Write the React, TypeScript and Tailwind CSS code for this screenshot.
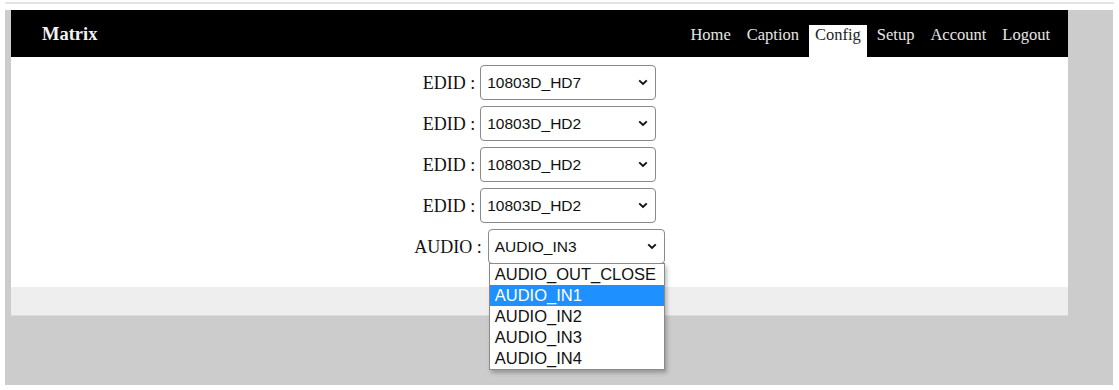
import React from 'react';

const NAV = ['Home', 'Caption', 'Config', 'Setup', 'Account', 'Logout'];
const AUDIO_OPTIONS = ['AUDIO_OUT_CLOSE', 'AUDIO_IN1', 'AUDIO_IN2', 'AUDIO_IN3', 'AUDIO_IN4'];

const Chevron: React.FC = () => (
  <svg width="10" height="7" viewBox="0 0 10 7" className="shrink-0">
    <path d="M1.2 1.4 L5 5 L8.8 1.4" fill="none" stroke="#111" strokeWidth="1.9" />
  </svg>
);

const FakeSelect: React.FC<{ value: string; width: string; children?: React.ReactNode }> = ({ value, width, children }) => (
  <div className={`relative ${width}`}>
    <div className="h-[35px] w-full flex items-center justify-between bg-white border border-[#8a8a8a] rounded-[4px] pl-[6px] pr-[7px] text-[15.5px] text-[#111] font-['Liberation_Sans',Arial,sans-serif]">
      <span>{value}</span>
      <Chevron />
    </div>
    {children}
  </div>
);

const App: React.FC = () => {
  return (
    <div className="w-[1119px] h-[390px] bg-white overflow-hidden font-['Liberation_Serif','Times_New_Roman',serif]">
      <div className="h-[2px]" />
      <div className="ml-[5px] w-[1109px] h-[2px] bg-[#e4e4e4]" />
      <div className="h-[6px]" />
      <div className="ml-[5px] w-[1108px] h-[375px] bg-[#cccccc] pl-[6px]">
        <div className="w-[1057px]">
          <div className="h-[47px] bg-black flex justify-between items-end pr-[12px]">
            <div className="self-start mt-[14px] pl-[31px] text-[18.5px] leading-[20px] font-bold text-[#f2f2f2]">Matrix</div>
            <ul className="flex items-end gap-[4px]">
              {NAV.map((n) => (
                <li
                  key={n}
                  className={`h-[32px] px-[6px] pt-[1px] text-[16.5px] leading-[18px] ${
                    n === 'Config' ? 'bg-white text-[#222]' : 'text-[#e6e6e6]'
                  }`}
                >
                  {n}
                </li>
              ))}
            </ul>
          </div>

          <div className="h-[230px] bg-white pt-[8px] flex flex-col items-center gap-[6px] text-[18px] leading-[20px] text-[#111]">
            <div className="flex items-center">
              <span className="mr-[5px]">EDID :</span>
              <FakeSelect value="10803D_HD7" width="w-[176px]" />
            </div>
            <div className="flex items-center">
              <span className="mr-[5px]">EDID :</span>
              <FakeSelect value="10803D_HD2" width="w-[176px]" />
            </div>
            <div className="flex items-center">
              <span className="mr-[5px]">EDID :</span>
              <FakeSelect value="10803D_HD2" width="w-[176px]" />
            </div>
            <div className="flex items-center">
              <span className="mr-[5px]">EDID :</span>
              <FakeSelect value="10803D_HD2" width="w-[176px]" />
            </div>
            <div className="flex items-center">
              <span className="mr-[6px]">AUDIO :</span>
              <FakeSelect value="AUDIO_IN3" width="w-[177px]">
                <ul className="absolute z-10 left-[1px] top-[34px] w-[176px] bg-white border border-[#8a8a8a] shadow-[2px_3px_4px_rgba(0,0,0,0.25)] font-['Liberation_Sans',Arial,sans-serif] text-[16.5px] leading-[21px]">
                  {AUDIO_OPTIONS.map((o) => (
                    <li
                      key={o}
                      className={`h-[21px] pl-[5px] ${o === 'AUDIO_IN1' ? 'bg-[#1e90ff] text-white' : 'text-[#111]'}`}
                    >
                      {o}
                    </li>
                  ))}
                </ul>
              </FakeSelect>
            </div>
          </div>

          <div className="h-[29px] bg-[#eeeeee] border-b border-[#dcdcdc]" />
        </div>
      </div>
    </div>
  );
};

export default App;
